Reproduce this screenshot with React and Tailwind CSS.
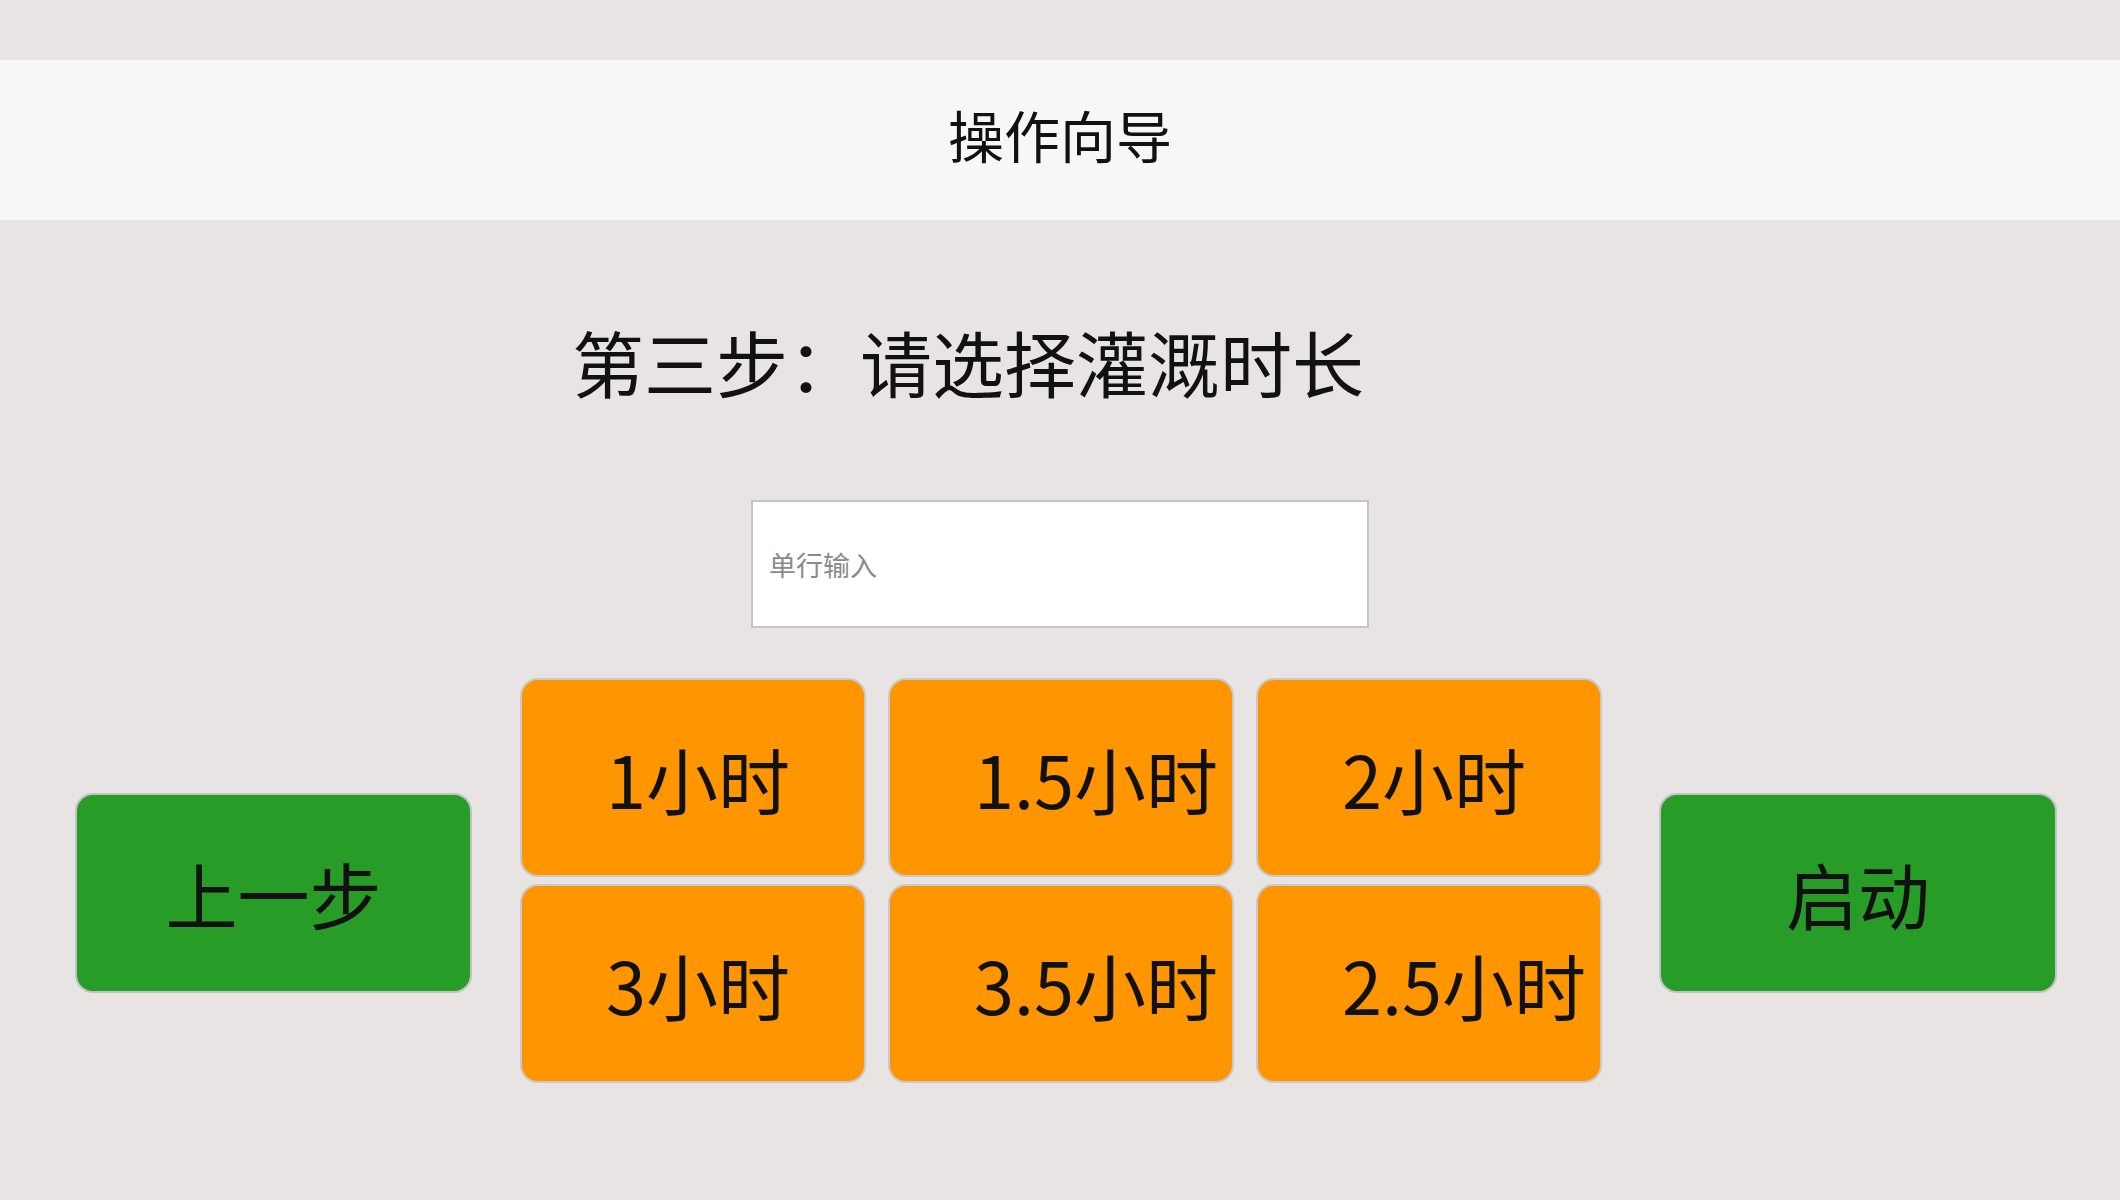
export default function App() {
  const font = { fontFamily: '"Noto Sans CJK SC", "Noto Sans", sans-serif' };
  const cells = ["1小时", "1.5小时", "2小时", "3小时", "3.5小时", "2.5小时"];
  return (
    <div className="w-[2120px] h-[1200px] bg-[#e7e4e3] text-[#111] overflow-hidden" style={font}>
      <div className="h-[60px]" />
      <div className="h-[160px] bg-[#f7f7f7] flex items-center justify-center pb-[12px]">
        <span className="text-[56px] leading-none">操作向导</span>
      </div>
      <div className="pl-[572px] pt-[105px] h-[280px]">
        <h1 className="text-[72px] leading-none font-normal">第三步：请选择灌溉时长</h1>
      </div>
      <div className="pl-[751px]">
        <div className="w-[618px] h-[128px] bg-white border-2 border-[#c4c4c4] flex items-center pl-[16px]">
          <span className="text-[27px] text-[#8a8a8a] leading-none">单行输入</span>
        </div>
      </div>
      <div className="flex items-start pl-[75px] mt-[50px]">
        <button className="mt-[115px] w-[397px] h-[200px] rounded-[18px] bg-[#279c27] border-2 border-[#c2c2c2] flex items-center justify-center text-[72px] leading-none">
          上一步
        </button>
        <div className="ml-[48px] grid grid-cols-[repeat(3,346px)] grid-rows-[repeat(2,199px)] gap-x-[22px] gap-y-[7px]">
          {cells.map((c) => (
            <button
              key={c}
              className="rounded-[18px] bg-[#ff9500] border-2 border-[#c9c9c9] flex items-center justify-start pl-[84px] text-[72px] leading-none"
            >
              {c}
            </button>
          ))}
        </div>
        <button className="ml-[57px] mt-[115px] w-[398px] h-[200px] rounded-[18px] bg-[#279c27] border-2 border-[#c2c2c2] flex items-center justify-center text-[72px] leading-none">
          启动
        </button>
      </div>
    </div>
  );
}
